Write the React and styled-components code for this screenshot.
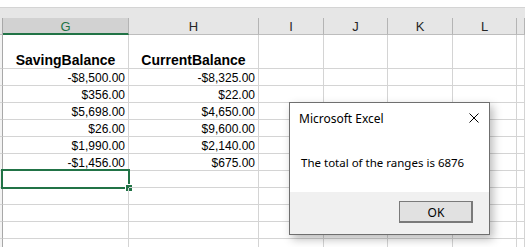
import styled, { createGlobalStyle } from "styled-components";

const GlobalStyle = createGlobalStyle`
  html, body {
    margin: 0;
    padding: 0;
    background: #fff;
  }
  * {
    box-sizing: border-box;
  }
`;

const Page = styled.div`
  position: relative;
  width: 525px;
  height: 247px;
  overflow: hidden;
  background: #fff;
  font-family: "Liberation Sans", Arial, sans-serif;
`;

const TopGap = styled.div`
  height: 8px;
  border-bottom: 1px solid #d4d4d4;
`;

const Strip = styled.div`
  height: 10px;
  background: #e6e6e6;
`;

const Sheet = styled.div`
  display: grid;
  grid-template-columns: 3px 126px 130px 65px 64px 65px 64px 1fr;
  grid-template-rows: 17px 34px repeat(11, 17px);
`;

const Corner = styled.div`
  background: #e6e6e6;
  border-right: 1px solid #a8a8a8;
  border-bottom: 1px solid #bdbdbd;
`;

const HeaderCell = styled.div`
  display: flex;
  align-items: center;
  justify-content: center;
  background: ${(p) => (p.$selected ? "#d2d2d2" : "#e6e6e6")};
  border-right: 1px solid #b4b4b4;
  border-bottom: ${(p) => (p.$selected ? "2px solid #217346" : "1px solid #bdbdbd")};
  color: ${(p) => (p.$selected ? "#217346" : "#262626")};
  font-size: 13px;
  padding-top: ${(p) => (p.$selected ? "1px" : "0")};
`;

const RowHead = styled.div`
  background: #f3f3f3;
  border-right: 1px solid #a8a8a8;
  border-bottom: 1px solid #d4d4d4;
`;

const Cell = styled.div`
  position: relative;
  display: flex;
  align-items: flex-end;
  justify-content: ${(p) => (p.$head ? "center" : "flex-end")};
  border-right: 1px solid #d4d4d4;
  border-bottom: 1px solid #d4d4d4;
  padding-right: ${(p) => (p.$head ? "0" : "3px")};
  font-size: ${(p) => (p.$head ? "14px" : "12px")};
  font-weight: ${(p) => (p.$head ? 700 : 400)};
  line-height: ${(p) => (p.$head ? "15px" : "14px")};
  color: #000;
  white-space: nowrap;
`;

const Selection = styled.div`
  position: absolute;
  left: -2px;
  top: -2px;
  right: -2px;
  bottom: -2px;
  border: 2px solid #217346;
  pointer-events: none;
`;

const Handle = styled.span`
  position: absolute;
  right: -5px;
  bottom: -5px;
  width: 8px;
  height: 8px;
  background: #217346;
  border: 1px solid #fff;
`;

const Dialog = styled.div`
  position: absolute;
  left: 289px;
  top: 102px;
  width: 201px;
  height: 133px;
  display: flex;
  flex-direction: column;
  background: #fff;
  border: 1px solid #6f6f6f;
  box-shadow: 3px 4px 9px rgba(0, 0, 0, 0.28);
  font-family: "Noto Sans", "Open Sans", sans-serif;
  color: #000;
`;

const TitleBar = styled.div`
  height: 30px;
  display: flex;
  align-items: center;
  justify-content: space-between;
  padding: 0 10px 0 9px;
  font-size: 12px;
`;

const Body = styled.div`
  flex: 1;
  display: flex;
  align-items: center;
  padding-left: 11px;
  font-size: 11.5px;
`;

const Footer = styled.div`
  height: 42px;
  display: flex;
  justify-content: flex-end;
  align-items: flex-start;
  padding: 9px 16px 0 0;
  background: #f0f0f0;
`;

const Button = styled.button`
  width: 74px;
  height: 22px;
  padding: 0;
  background: #e1e1e1;
  border: 1px solid #7a7a7a;
  box-shadow: inset -1px -1px 0 #7a7a7a;
  font-family: "Noto Sans", "Open Sans", sans-serif;
  font-size: 12px;
  color: #000;
`;

const CloseIcon = () => (
  <svg width="10" height="10" viewBox="0 0 10 10">
    <path d="M0.5 0.5 L9.5 9.5 M9.5 0.5 L0.5 9.5" stroke="#000" strokeWidth="1" />
  </svg>
);

const columns = ["G", "H", "I", "J", "K", "L", "M"];

const rows = [
  ["SavingBalance", "CurrentBalance"],
  ["-$8,500.00", "-$8,325.00"],
  ["$356.00", "$22.00"],
  ["$5,698.00", "$4,650.00"],
  ["$26.00", "$9,600.00"],
  ["$1,990.00", "$2,140.00"],
  ["-$1,456.00", "$675.00"],
  ["", ""],
  ["", ""],
  ["", ""],
  ["", ""],
  ["", ""],
];

const App = () => {
  return (
    <Page>
      <GlobalStyle />
      <TopGap />
      <Strip />
      <Sheet>
        <Corner />
        {columns.map((c) => (
          <HeaderCell key={c} $selected={c === "G"}>
            {c === "M" ? "" : c}
          </HeaderCell>
        ))}
        {rows.map((r, i) => [
          <RowHead key={`rh${i}`} />,
          ...columns.map((c, j) => (
            <Cell key={`${i}-${c}`} $head={i === 0}>
              {j < 2 ? r[j] : ""}
              {i === 7 && j === 0 && (
                <Selection>
                  <Handle />
                </Selection>
              )}
            </Cell>
          )),
        ])}
      </Sheet>
      <Dialog>
        <TitleBar>
          <span>Microsoft Excel</span>
          <CloseIcon />
        </TitleBar>
        <Body>The total of the ranges is 6876</Body>
        <Footer>
          <Button>OK</Button>
        </Footer>
      </Dialog>
    </Page>
  );
};

export default App;
